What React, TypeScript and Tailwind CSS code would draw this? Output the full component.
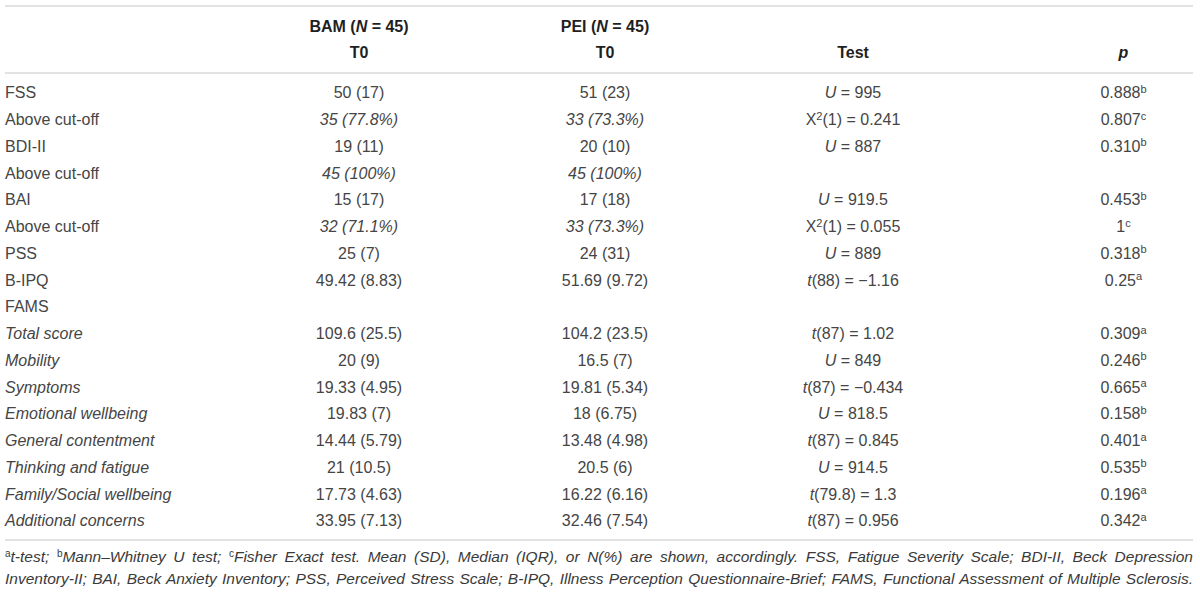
import type { ReactNode } from 'react'

type Row = {
  label: string
  labelItalic?: boolean
  bam?: string
  pei?: string
  valItalic?: boolean
  test?: ReactNode
  p?: string
  sup?: string
}

const U = (v: string) => (
  <>
    <i>U</i> = {v}
  </>
)
const T = (df: string, v: string) => (
  <>
    <i>t</i>({df}) = {v}
  </>
)
const X = (v: string) => (
  <>
    X<sup className="text-[11px]">2</sup>(1) = {v}
  </>
)

const rows: Row[] = [
  { label: 'FSS', bam: '50 (17)', pei: '51 (23)', test: U('995'), p: '0.888', sup: 'b' },
  { label: 'Above cut-off', bam: '35 (77.8%)', pei: '33 (73.3%)', valItalic: true, test: X('0.241'), p: '0.807', sup: 'c' },
  { label: 'BDI-II', bam: '19 (11)', pei: '20 (10)', test: U('887'), p: '0.310', sup: 'b' },
  { label: 'Above cut-off', bam: '45 (100%)', pei: '45 (100%)', valItalic: true },
  { label: 'BAI', bam: '15 (17)', pei: '17 (18)', test: U('919.5'), p: '0.453', sup: 'b' },
  { label: 'Above cut-off', bam: '32 (71.1%)', pei: '33 (73.3%)', valItalic: true, test: X('0.055'), p: '1', sup: 'c' },
  { label: 'PSS', bam: '25 (7)', pei: '24 (31)', test: U('889'), p: '0.318', sup: 'b' },
  { label: 'B-IPQ', bam: '49.42 (8.83)', pei: '51.69 (9.72)', test: T('88', '\u22121.16'), p: '0.25', sup: 'a' },
  { label: 'FAMS' },
  { label: 'Total score', labelItalic: true, bam: '109.6 (25.5)', pei: '104.2 (23.5)', test: T('87', '1.02'), p: '0.309', sup: 'a' },
  { label: 'Mobility', labelItalic: true, bam: '20 (9)', pei: '16.5 (7)', test: U('849'), p: '0.246', sup: 'b' },
  { label: 'Symptoms', labelItalic: true, bam: '19.33 (4.95)', pei: '19.81 (5.34)', test: T('87', '\u22120.434'), p: '0.665', sup: 'a' },
  { label: 'Emotional wellbeing', labelItalic: true, bam: '19.83 (7)', pei: '18 (6.75)', test: U('818.5'), p: '0.158', sup: 'b' },
  { label: 'General contentment', labelItalic: true, bam: '14.44 (5.79)', pei: '13.48 (4.98)', test: T('87', '0.845'), p: '0.401', sup: 'a' },
  { label: 'Thinking and fatigue', labelItalic: true, bam: '21 (10.5)', pei: '20.5 (6)', test: U('914.5'), p: '0.535', sup: 'b' },
  { label: 'Family/Social wellbeing', labelItalic: true, bam: '17.73 (4.63)', pei: '16.22 (6.16)', test: T('79.8', '1.3'), p: '0.196', sup: 'a' },
  { label: 'Additional concerns', labelItalic: true, bam: '33.95 (7.13)', pei: '32.46 (7.54)', test: T('87', '0.956'), p: '0.342', sup: 'a' },
]

export default function App() {
  return (
    <div className="bg-white w-[1200px] h-[594px] pt-[5px] pl-[5px] pr-[7px] font-['Liberation_Sans',Arial,sans-serif] text-[16px] text-[#454545]">
      <table className="w-full table-fixed border-collapse">
        <colgroup>
          <col className="w-[235px]" />
          <col className="w-[238px]" />
          <col className="w-[254px]" />
          <col className="w-[322px]" />
          <col />
        </colgroup>
        <thead className="border-y-2 border-[#e2e2e2] text-[#1f1f1f] font-bold">
          <tr className="h-[34px] align-bottom">
            <th />
            <th className="text-center font-bold pb-[1px]">
              BAM (<i>N</i> = 45)
            </th>
            <th className="text-center font-bold pb-[1px]">
              PEI (<i>N</i> = 45)
            </th>
            <th />
            <th />
          </tr>
          <tr className="h-[33px] align-top">
            <th />
            <th className="text-center font-bold pt-[1px]">T0</th>
            <th className="text-center font-bold pt-[1px]">T0</th>
            <th className="text-center font-bold pt-[1px] pr-[80px]">Test</th>
            <th className="text-center font-bold pt-[1px]">
              <i>p</i>
            </th>
          </tr>
        </thead>
        <tbody className="border-b-2 border-[#e2e2e2]">
          <tr className="h-[7px]">
            <td colSpan={5} />
          </tr>
          {rows.map((r, i) => (
            <tr key={i} className="h-[26.75px]">
              <td className={r.labelItalic ? 'italic' : ''}>{r.label}</td>
              <td className={`text-center ${r.valItalic ? 'italic' : ''}`}>{r.bam}</td>
              <td className={`text-center ${r.valItalic ? 'italic' : ''}`}>{r.pei}</td>
              <td className="text-center pr-[80px]">{r.test}</td>
              <td className="text-center">
                {r.p}
                {r.sup && <sup className="text-[11px]">{r.sup}</sup>}
              </td>
            </tr>
          ))}
          <tr className="h-[5px]">
            <td colSpan={5} />
          </tr>
        </tbody>
      </table>
      <div className="pt-[5px] text-[15.5px] leading-[22px] italic text-[#3a3a3a]">
        <p className="text-justify [text-align-last:justify] whitespace-nowrap">
          <sup className="not-italic text-[10px]">a</sup>t-test; <sup className="not-italic text-[10px]">b</sup>Mann–Whitney U test;{' '}
          <sup className="not-italic text-[10px]">c</sup>Fisher Exact test. Mean (SD), Median (IQR), or N(%) are shown, accordingly. FSS, Fatigue
          Severity Scale; BDI-II, Beck Depression
        </p>
        <p className="text-justify [text-align-last:justify] whitespace-nowrap">
          Inventory-II; BAI, Beck Anxiety Inventory; PSS, Perceived Stress Scale; B-IPQ, Illness Perception Questionnaire-Brief; FAMS, Functional
          Assessment of Multiple Sclerosis.
        </p>
      </div>
    </div>
  )
}
